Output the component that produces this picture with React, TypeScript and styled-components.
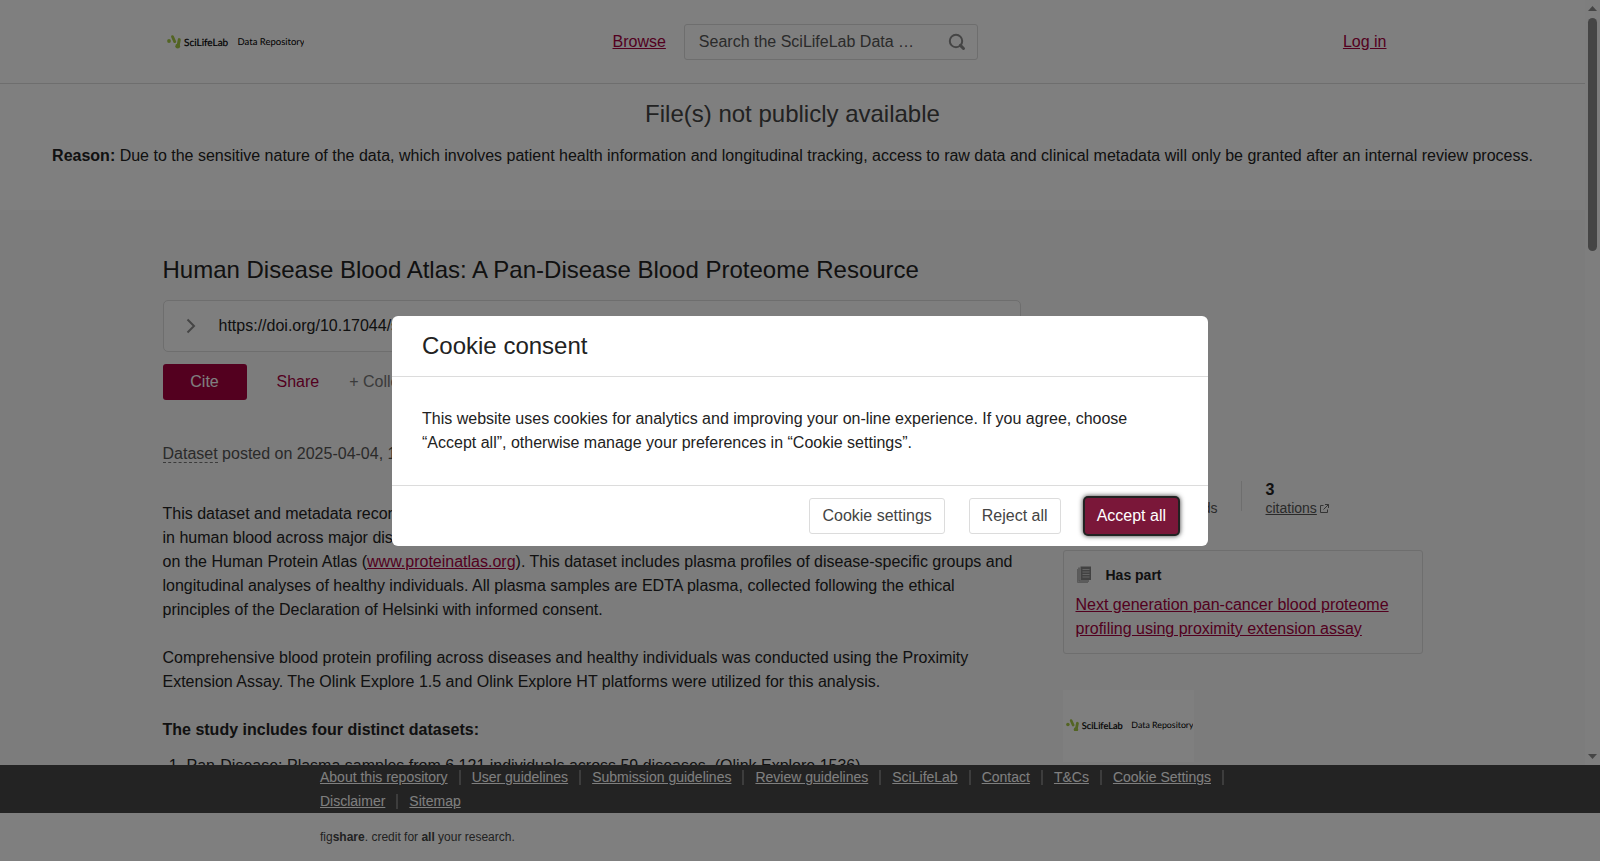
import React from 'react';
import styled, { createGlobalStyle, css } from 'styled-components';

const brand = '#a6003f';
const line = '#dcdcdc';

const GlobalStyle = createGlobalStyle`
  *, *::before, *::after { box-sizing: border-box; }
  body {
    margin: 0;
    background: #fff;
    color: #222;
    font: 16px/24px "Liberation Sans", Arial, sans-serif;
  }
  h1, h2, h3, p, ol, ul { margin: 0; padding: 0; font-size: inherit; font-weight: normal; }
  button, input { font: inherit; }
`;

const Page = styled.div`
  display: flex;
  flex-direction: column;
  height: 100vh;
`;

const Viewport = styled.div`
  display: flex;
  flex: 1;
  min-height: 0;
`;

const Scroller = styled.div`
  flex: 1;
  min-width: 0;
  overflow: hidden;
`;

const ScrollRail = styled.div`
  display: flex;
  flex-direction: column;
  align-items: center;
  width: 15px;
  padding: 6px 0;
  background: #fcfcfc;
`;

const RailArrow = styled.svg`
  flex: none;
  width: 9px;
  height: 5px;
  fill: #8b8b8b;
`;

const RailTrack = styled.div`
  flex: 1;
  width: 9px;
  padding: 7px 0;
`;

const RailThumb = styled.div`
  height: 32%;
  border-radius: 5px;
  background: #8b8b8b;
`;

const Container = styled.div`
  width: 100%;
  max-width: 1260px;
  margin: 0 auto;
`;

const Header = styled.header`
  border-bottom: 1px solid ${line};
`;

const HeaderRow = styled(Container)`
  display: flex;
  align-items: center;
  min-height: 83px;
  padding: 0 36px 0 4px;
`;

const LogoLink = styled.a`
  display: flex;
  flex: 0 0 446px;
`;

const BrandLink = styled.a`
  color: ${brand};
  text-decoration: underline;
`;

const SearchBox = styled.form`
  display: flex;
  align-items: center;
  width: 294px;
  height: 36px;
  margin-left: 18px;
  padding: 0 11px 0 14px;
  border: 1px solid ${line};
  border-radius: 3px;
`;

const SearchInput = styled.input`
  flex: 1;
  min-width: 0;
  padding: 0;
  border: 0;
  outline: 0;
  background: none;
  color: #555;
  &::placeholder { color: #555; opacity: 1; }
`;

const IconButton = styled.button`
  display: flex;
  padding: 0;
  border: 0;
  background: none;
`;

const LoginLink = styled(BrandLink)`
  margin-left: auto;
`;

const Notice = styled.section`
  padding: 12px 36px 42px;
  text-align: center;
`;

const NoticeTitle = styled.h2`
  margin-bottom: 12px;
  color: #444;
  font-size: 24px;
  line-height: 36px;
`;

const Article = styled.main`
  min-height: 100%;
  padding: 42px 0;
  background: #f8f8f8;
`;

const Columns = styled(Container)`
  display: flex;
  gap: 42px;
`;

const MainColumn = styled.div`
  flex: 1;
  min-width: 0;
`;

const Title = styled.h1`
  font-size: 24px;
  line-height: 36px;
`;

const DoiBox = styled.div`
  display: flex;
  align-items: center;
  gap: 23px;
  height: 52px;
  margin: 12px 0;
  padding: 0 22px;
  border: 1px solid ${line};
  border-radius: 5px;
  background: #fcfcfc;
`;

const Actions = styled.div`
  display: flex;
  align-items: center;
  gap: 30px;
`;

const CiteButton = styled.button`
  width: 84px;
  height: 36px;
  padding: 0;
  border: 0;
  border-radius: 3px;
  background: ${brand};
  color: #fff;
`;

const TextButton = styled.button<{ $muted?: boolean }>`
  padding: 0;
  border: 0;
  background: none;
  color: ${p => (p.$muted ? '#777' : brand)};
`;

const Posted = styled.p`
  margin: 42px 0 36px;
  color: #555;
`;

const ItemType = styled.span`
  border-bottom: 1px dashed #777;
`;

const Description = styled.div`
  p + p { margin-top: 24px; }
`;

const DatasetList = styled.ol`
  margin-top: 12px;
  padding-left: 24px;
`;

const Aside = styled.aside`
  flex: 0 0 360px;
  padding-top: 229px;
`;

const Stats = styled.div`
  display: flex;
  align-items: flex-start;
  margin-bottom: 33px;
`;

const Stat = styled.div`
  font-size: 14px;
  line-height: 18px;
  color: #555;
  strong {
    display: block;
    font-size: 16px;
    color: #222;
  }
`;

const StatDivider = styled.span`
  width: 1px;
  height: 30px;
  margin: 0 23px 0 24px;
  background: ${line};
`;

const CitationsLink = styled.a`
  color: #555;
  svg { margin-left: 3px; }
`;

const Card = styled.section`
  padding: 12px;
  border: 1px solid ${line};
  border-radius: 3px;
`;

const CardTitle = styled.h3`
  display: flex;
  align-items: center;
  gap: 14px;
  margin-bottom: 6px;
  font-size: 14px;
  font-weight: bold;
`;

const GroupLogo = styled.a`
  display: flex;
  align-items: center;
  width: 131px;
  height: 72px;
  margin-top: 36px;
  padding: 0 0 2px 3px;
  background: #fff;
`;

const FooterBar = styled.nav`
  background: #464646;
`;

const FooterInner = styled.div`
  width: 100%;
  max-width: 960px;
  margin: 0 auto;
`;

const FooterLinks = styled(FooterInner).attrs({ as: 'ul' })`
  display: flex;
  flex-wrap: wrap;
  list-style: none;
  font-size: 14px;
`;

const FooterItem = styled.li`
  display: flex;
  align-items: center;
  a { color: #fff; }
  &:not(:last-child)::after {
    content: '';
    width: 2px;
    height: 15px;
    margin: 0 11px;
    background: #7a7a7a;
  }
`;

const Credit = styled.footer`
  padding: 12px 0;
  background: #fff;
  color: #444;
  font-size: 12px;
`;

const Backdrop = styled.div`
  position: fixed;
  inset: 0;
  display: flex;
  align-items: center;
  justify-content: center;
  background: rgba(0, 0, 0, 0.5);
`;

const Dialog = styled.div`
  width: 100%;
  max-width: 816px;
  border-radius: 6px;
  background: #fff;
`;

const DialogTitle = styled.h2`
  padding: 12px 30px;
  border-bottom: 1px solid ${line};
  font-size: 24px;
  line-height: 36px;
`;

const DialogText = styled.p`
  padding: 30px;
`;

const DialogActions = styled.div`
  display: flex;
  justify-content: flex-end;
  gap: 24px;
  padding: 12px 30px;
  border-top: 1px solid ${line};
`;

const DialogButton = styled.button<{ $primary?: boolean }>`
  height: 36px;
  padding: 0 12px;
  border: 1px solid ${line};
  border-radius: 3px;
  background: #fff;
  color: #444;
  outline: 0;
  ${p =>
    p.$primary &&
    css`
      border: 0;
      background: #7a1739;
      color: #fff;
      box-shadow: 0 0 0 2px #222, 0 0 5px 2px rgba(0, 0, 0, 0.8);
    `}
`;

const Logo = ({ width }: { width: number }) => (
  <svg width={width} viewBox="0 0 137 14" role="img" aria-label="SciLifeLab Data Repository">
    <g stroke="#a7c947" strokeLinecap="round" fill="#a7c947">
      <circle cx="2" cy="6" r="1.9" stroke="none" />
      <path d="M5.5 1.6L7.700 6.600" strokeWidth="2.800" />
      <path d="M12.300 4.600L11 11.400" strokeWidth="3" />
      <circle cx="10.700" cy="11.200" r="2.400" stroke="none" />
    </g>
    <text x="17" y="11.2" fontFamily="Lato, sans-serif" fontSize="10" stroke="#000" strokeWidth="0.2" textRendering="geometricPrecision">
      SciLifeLab
    </text>
    <text x="70.500" y="10.2" fontFamily="Lato, sans-serif" fontSize="9.5" textRendering="geometricPrecision">
      Data Repository
    </text>
  </svg>
);

const footerLinks = [
  'About this repository',
  'User guidelines',
  'Submission guidelines',
  'Review guidelines',
  'SciLifeLab',
  'Contact',
  'T&Cs',
  'Cookie Settings',
  'Disclaimer',
  'Sitemap',
];

export default function App() {
  return (
    <>
      <GlobalStyle />
      <Page>
        <Viewport>
          <Scroller>
            <Header>
              <HeaderRow>
                <LogoLink href="#">
                  <Logo width={137} />
                </LogoLink>
                <BrandLink href="#">Browse</BrandLink>
                <SearchBox role="search">
                  <SearchInput type="text" aria-label="Search" placeholder="Search the SciLifeLab Data …" />
                  <IconButton type="button" aria-label="Submit search">
                    <svg width="18" height="18" viewBox="0 0 18 18" fill="none" stroke="#8b8b8b">
                      <circle cx="8" cy="8" r="6.200" strokeWidth="2" />
                      <path d="M12.400 12.400L15.500 15.500" strokeWidth="3" strokeLinecap="round" />
                    </svg>
                  </IconButton>
                </SearchBox>
                <LoginLink href="#">Log in</LoginLink>
              </HeaderRow>
            </Header>

            <Notice>
              <NoticeTitle>File(s) not publicly available</NoticeTitle>
              <p>
                <b>Reason:</b> Due to the sensitive nature of the data, which involves patient health information and
                longitudinal tracking, access to raw data and clinical metadata will only be granted after an internal
                review process.
              </p>
            </Notice>

            <Article>
              <Columns>
                <MainColumn>
                  <Title>Human Disease Blood Atlas: A Pan-Disease Blood Proteome Resource</Title>
                  <DoiBox>
                    <svg width="10" height="16" viewBox="0 0 10 16" fill="none" stroke="#8b8b8b" strokeWidth="2">
                      <path d="M1.500 1.500L8 8L1.500 14.500" />
                    </svg>
                    <span>https://doi.org/10.17044/scilifelab</span>
                  </DoiBox>
                  <Actions>
                    <CiteButton type="button">Cite</CiteButton>
                    <TextButton type="button">Share</TextButton>
                    <TextButton type="button" $muted>
                      + Collect
                    </TextButton>
                  </Actions>
                  <Posted>
                    <ItemType>Dataset</ItemType> posted on 2025-04-04, 12:00
                  </Posted>
                  <Description>
                    <p>
                      This dataset and metadata record describes the profiling of circulating proteins
                      <br />
                      in human blood across major diseases, available in the Disease Blood Atlas
                      <br />
                      on the Human Protein Atlas (<BrandLink href="#">www.proteinatlas.org</BrandLink>). This dataset
                      includes plasma profiles of disease-specific groups and longitudinal analyses of healthy
                      individuals. All plasma samples are EDTA plasma, collected following the ethical principles of the
                      Declaration of Helsinki with informed consent.
                    </p>
                    <p>
                      Comprehensive blood protein profiling across diseases and healthy individuals was conducted using
                      the Proximity Extension Assay. The Olink Explore 1.5 and Olink Explore HT platforms were utilized
                      for this analysis.
                    </p>
                    <p>
                      <b>The study includes four distinct datasets:</b>
                    </p>
                    <DatasetList>
                      <li>
                        Pan-Disease: Plasma samples from 6,121 individuals across 59 diseases. (Olink Explore 1536)
                      </li>
                    </DatasetList>
                  </Description>
                </MainColumn>

                <Aside>
                  <Stats>
                    <Stat>
                      <strong>1,204</strong>views
                    </Stat>
                    <StatDivider />
                    <Stat>
                      <strong>0</strong>downloads
                    </Stat>
                    <StatDivider />
                    <Stat>
                      <strong>3</strong>
                      <CitationsLink href="#">
                        citations
                        <svg width="9" height="9" viewBox="0 0 9 9" fill="none" stroke="#666">
                          <path d="M3.500 1.500H0.500V8.500H7.500V5.500M5 0.500H8.500V4M8.500 0.500L3.500 5.500" />
                        </svg>
                      </CitationsLink>
                    </Stat>
                  </Stats>
                  <Card>
                    <CardTitle>
                      <svg width="16" height="18" viewBox="0 0 16 18">
                        <path d="M1.500 3V16.500H12" fill="none" stroke="#b4b4b4" />
                        <path d="M3 1.500V15H13" fill="none" stroke="#a4a4a4" strokeWidth="1.500" />
                        <path d="M4.500 0.500H15V14H4.500Z" fill="#858585" />
                        <path d="M6.500 3.500H13.500M6.500 6H13.500M6.500 8.500H13.500M6.500 11H13.500" stroke="#c8c8c8" />
                      </svg>
                      Has part
                    </CardTitle>
                    <BrandLink href="#">
                      Next generation pan-cancer blood proteome profiling using proximity extension assay
                    </BrandLink>
                  </Card>
                  <GroupLogo href="#">
                    <Logo width={127} />
                  </GroupLogo>
                </Aside>
              </Columns>
            </Article>
          </Scroller>
          <ScrollRail aria-hidden="true">
            <RailArrow viewBox="0 0 9 5">
              <path d="M0 5L4.500 0L9 5Z" />
            </RailArrow>
            <RailTrack>
              <RailThumb />
            </RailTrack>
            <RailArrow viewBox="0 0 9 5">
              <path d="M0 0L4.500 5L9 0Z" />
            </RailArrow>
          </ScrollRail>
        </Viewport>

        <FooterBar aria-label="Footer">
          <FooterLinks>
            {footerLinks.map(label => (
              <FooterItem key={label}>
                <a href="#">{label}</a>
              </FooterItem>
            ))}
          </FooterLinks>
        </FooterBar>
        <Credit>
          <FooterInner>
            fig<b>share</b>. credit for <b>all</b> your research.
          </FooterInner>
        </Credit>
      </Page>

      <Backdrop>
        <Dialog role="dialog" aria-modal="true" aria-labelledby="cookie-title">
          <DialogTitle id="cookie-title">Cookie consent</DialogTitle>
          <DialogText>
            This website uses cookies for analytics and improving your on-line experience. If you agree, choose “Accept
            all”, otherwise manage your preferences in “Cookie settings”.
          </DialogText>
          <DialogActions>
            <DialogButton type="button">Cookie settings</DialogButton>
            <DialogButton type="button">Reject all</DialogButton>
            <DialogButton type="button" $primary>
              Accept all
            </DialogButton>
          </DialogActions>
        </Dialog>
      </Backdrop>
    </>
  );
}
